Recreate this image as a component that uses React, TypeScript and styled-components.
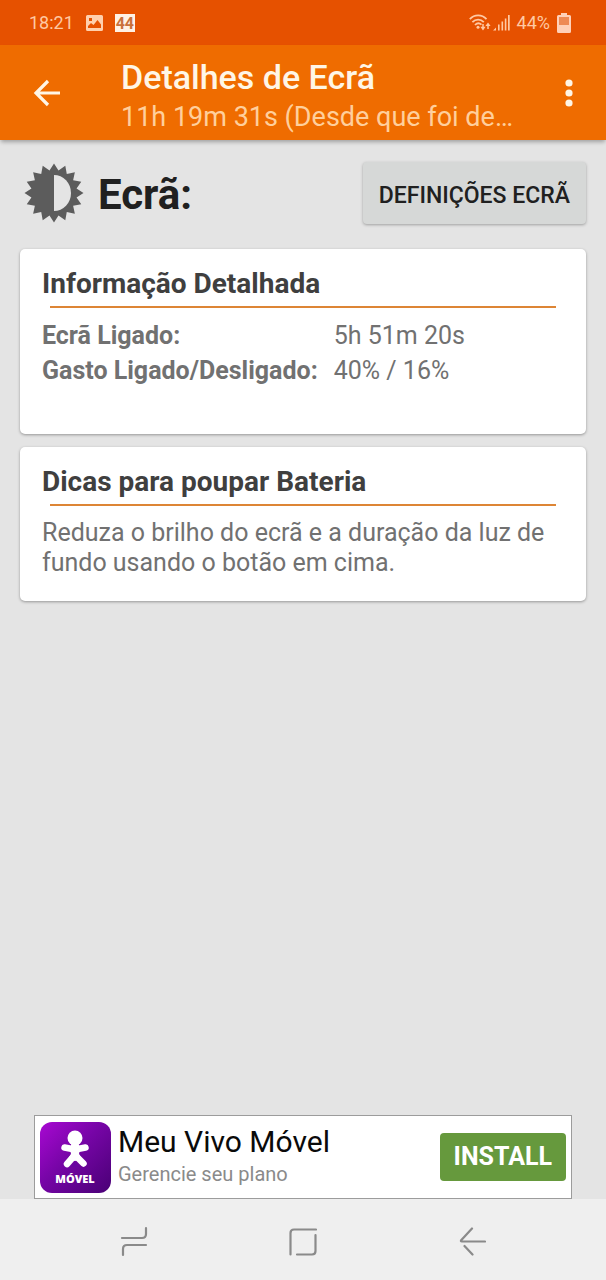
import React from "react";
import styled, { createGlobalStyle } from "styled-components";

const GlobalStyle = createGlobalStyle`
  *, *::before, *::after { box-sizing: border-box; }
  body {
    margin: 0;
    background: #e4e4e4;
    font-family: Roboto, "Liberation Sans", sans-serif;
  }
  button { font-family: inherit; border: 0; padding: 0; background: none; cursor: pointer; }
  h1, h2, p { margin: 0; }
  svg { display: block; }
`;

const Screen = styled.div`
  min-height: 100vh;
  display: flex;
  flex-direction: column;
  background: #e4e4e4;
`;

const StatusBar = styled.div`
  display: flex;
  justify-content: space-between;
  align-items: center;
  height: 45px;
  padding: 0 35px 0 29px;
  background: #e65100;
  color: #ffc9a3;
  font-size: 18px;
  line-height: 24px;
`;

const StatusGroup = styled.div<{ $gap: number }>`
  display: flex;
  align-items: center;
  gap: ${(p) => p.$gap}px;
`;

const CountBadge = styled.span`
  width: 20px;
  height: 18px;
  background: #fff1e4;
  color: #c9703a;
  font-size: 16px;
  font-weight: 700;
  line-height: 19px;
  text-align: center;
`;

const AppBar = styled.header`
  display: flex;
  align-items: center;
  gap: 24px;
  height: 95px;
  padding: 0 20px 0 23px;
  background: #ef6c00;
  color: #fff6e6;
  box-shadow: 0 3px 4px -1px rgba(0, 0, 0, 0.3);
`;

const BarButton = styled.button<{ $width: number }>`
  flex: none;
  display: flex;
  align-items: center;
  justify-content: center;
  width: ${(p) => p.$width}px;
  height: 48px;
  color: inherit;
`;

const Titles = styled.div`
  flex: 1;
  min-width: 0;
  padding: 9px 0 0 26px;
`;

const Title = styled.h1`
  font-size: 34px;
  font-weight: 500;
  line-height: 40px;
`;

const Subtitle = styled.p`
  color: #ffcf9c;
  font-size: 27px;
  line-height: 40px;
`;

const Content = styled.main`
  flex: 1;
  display: flex;
  flex-direction: column;
  gap: 13px;
  padding: 22px 20px 24px;
`;

const Summary = styled.div`
  display: flex;
  align-items: center;
  justify-content: space-between;
  height: 62px;
  margin-bottom: 12px;
`;

const SummaryName = styled.div`
  display: flex;
  align-items: center;
  gap: 14px;
  padding-left: 4px;
`;

const SummaryTitle = styled.h2`
  padding-top: 4px;
  color: #202020;
  font-size: 42px;
  font-weight: 700;
  line-height: 48px;
`;

const SettingsButton = styled.button`
  height: 62px;
  padding: 4px 16px 0;
  border-radius: 4px;
  background: #d6d8d7;
  color: #202020;
  font-size: 23px;
  font-weight: 500;
  box-shadow: 0 1px 3px rgba(0, 0, 0, 0.3);
`;

const Card = styled.section<{ $bottom: number }>`
  padding: 19px 22px ${(p) => p.$bottom}px;
  border-radius: 5px;
  background: #fff;
  color: #717171;
  font-size: 25px;
  box-shadow: 0 1px 3px rgba(0, 0, 0, 0.35);
`;

const CardTitle = styled.h2`
  color: #3f3f3f;
  font-size: 28px;
  font-weight: 700;
  line-height: 32px;
`;

const Divider = styled.hr`
  height: 2px;
  margin: 6px 8px 10px;
  border: 0;
  background: #dd8535;
`;

const Facts = styled.table`
  border-collapse: collapse;
  line-height: 35px;

  th { padding: 0 16px 0 0; font-weight: 700; text-align: left; }
  td { padding: 0; }
`;

const Tip = styled.p`
  padding-top: 2px;
  line-height: 30px;
`;

const Ad = styled.aside`
  display: flex;
  align-items: center;
  gap: 7px;
  height: 84px;
  margin: 0 34px;
  padding: 0 5px;
  border: 1px solid #9c9c9c;
  background: #fff;
`;

const AdText = styled.div`
  flex: 1;
  min-width: 0;
  padding-bottom: 2px;
  white-space: nowrap;
`;

const AdTitle = styled.p`
  color: #0a0a0a;
  font-size: 30px;
  line-height: 36px;
`;

const AdDetail = styled.p`
  color: #8a8a8a;
  font-size: 20px;
  line-height: 28px;
`;

const InstallButton = styled.button`
  height: 48px;
  padding: 0 14px 2px;
  border-radius: 4px;
  background: #66993d;
  color: #fff;
  font-size: 25px;
  font-weight: 700;
`;

const NavBar = styled.nav`
  display: flex;
  justify-content: center;
  gap: 121px;
  height: 81px;
  background: #efefef;
  color: #8a8a8a;
`;

const NavButton = styled.button`
  display: flex;
  align-items: center;
  justify-content: center;
  width: 48px;
  padding-top: 4px;
  color: inherit;
`;

const PictureIcon = () => (
  <svg width="17" height="16" viewBox="0 0 17 16" aria-hidden="true">
    <path
      fill="#ffd0ad"
      fillRule="evenodd"
      d="M1.5 0h14A1.5 1.5 0 0 1 17 1.500v13a1.500 1.500 0 0 1-1.500 1.500h-14A1.500 1.500 0 0 1 0 14.500v-13A1.500 1.500 0 0 1 1.500 0zM2 13h13V9.500L11.500 5 7.500 10 5 8 2 11zM3 3v3h3V3z"
    />
  </svg>
);

const WifiIcon = () => (
  <svg width="22" height="17" viewBox="0 0 22 17" fill="none" stroke="#ffc9a3" strokeWidth="1.800" aria-hidden="true">
    <path d="M0.800 5.200C5.500 0.200 12.800 0.200 17.500 5.200M3.400 8.200c3.200-3.400 8.200-3.400 11.400 0M6 11c1.900-2 4.600-2.100 6.500-.4" />
    <circle cx="9" cy="13.200" r="1.500" fill="#ffc9a3" stroke="none" />
    <path d="M14 10v4M19 15v-4" strokeWidth="1.500" />
    <path d="M11.400 12.800h5.200L14 16.400zM16.400 12h5.200L19 8.600z" fill="#ffc9a3" stroke="none" />
  </svg>
);

const SignalIcon = () => (
  <svg width="17" height="17" viewBox="0 0 17 17" aria-hidden="true">
    <path fill="#ffc9a3" d="M0 16.500L3 13.500v3zM5 10.500h1.600v6H5zM8.500 7.500h1.600v9H8.500zM11.800 4.500h1.600v12h-1.600zM15 1h1.700v15.500H15z" />
  </svg>
);

const BatteryIcon = () => (
  <svg width="14" height="20" viewBox="0 0 14 20" aria-hidden="true">
    <path fill="#ffd0b8" d="M4 0h6v2h2.500A1.500 1.500 0 0 1 14 3.500v15a1.500 1.500 0 0 1-1.500 1.500h-11A1.500 1.500 0 0 1 0 18.500v-15A1.500 1.500 0 0 1 1.500 2H4z" />
    <path fill="#ee8a55" d="M2 4h10v8H2z" />
  </svg>
);

const BackArrow = () => (
  <svg width="28" height="28" viewBox="0 0 28 28" fill="none" stroke="currentColor" strokeWidth="3.200" aria-hidden="true">
    <path d="M27 14H3M15 2L3 14l12 12" />
  </svg>
);

const MoreDots = () => (
  <svg width="8" height="28" viewBox="0 0 8 28" fill="currentColor" aria-hidden="true">
    <circle cx="4" cy="4" r="3.600" />
    <circle cx="4" cy="14" r="3.600" />
    <circle cx="4" cy="24" r="3.600" />
  </svg>
);

const sunPoints = Array.from({ length: 32 }, (_, i) => {
  const radius = i % 2 === 0 ? 29.5 : 23;
  const angle = (i * Math.PI) / 16;
  return `${(30 + radius * Math.sin(angle)).toFixed(2)},${(30 - radius * Math.cos(angle)).toFixed(2)}`;
}).join(" ");

const BrightnessIcon = () => (
  <svg width="60" height="60" viewBox="0 0 60 60" aria-hidden="true">
    <polygon points={sunPoints} fill="#5c5c5c" />
    <path d="M30 12a17 18 0 0 1 0 36z" fill="#e4e4e4" />
  </svg>
);

const VivoLogo = () => (
  <svg width="71" height="71" viewBox="0 0 71 71" role="img" aria-label="Vivo Móvel">
    <defs>
      <linearGradient id="vivo" x1="0" y1="0" x2="1" y2="1">
        <stop offset="0" stopColor="#a808d2" />
        <stop offset="0.45" stopColor="#7605a6" />
        <stop offset="1" stopColor="#490075" />
      </linearGradient>
    </defs>
    <rect width="71" height="71" rx="12" fill="url(#vivo)" />
    <circle cx="35" cy="16" r="7.500" fill="#fff" />
    <path
      d="M24.500 25.500L35 27.500l10.500-2M34 34l-7 8M36 34l7.500 7.500"
      fill="none"
      stroke="#fff"
      strokeWidth="6.500"
      strokeLinecap="round"
      strokeLinejoin="round"
    />
    <path d="M31.500 21h7l1.500 6-1 5 3 5-7 2-7-2 3-5-1-5z" fill="#fff" />
    <path d="M31 45l4-5.500 4.500 5.500z" fill="#6804a0" />
    <text x="35" y="61" fill="#fff" fontFamily="'Open Sans', Roboto, sans-serif" fontSize="11" fontWeight="800" textAnchor="middle">
      MÓVEL
    </text>
  </svg>
);

const navStroke = { fill: "none", stroke: "currentColor", strokeWidth: 2.2, strokeLinecap: "round" as const };

const RecentsIcon = () => (
  <svg width="28" height="30" viewBox="0 0 28 30" aria-hidden="true" {...navStroke}>
    <path d="M2 11h20q4 0 4-4V1.200M26 18H7q-4 0-4 4v6" />
  </svg>
);

const HomeIcon = () => (
  <svg width="28" height="28" viewBox="0 0 28 28" aria-hidden="true" {...navStroke}>
    <path d="M1.500 26.500V5q0-3.500 3.500-3.500h22M26.500 7v16q0 3.500-3.500 3.500H8" />
  </svg>
);

const NavBackIcon = () => (
  <svg width="28" height="30" viewBox="0 0 28 30" aria-hidden="true" {...navStroke}>
    <path d="M27 14.500H4q-1.800 0-.6-1.500L14 1.500M6.500 19l8 8.500" />
  </svg>
);

const facts = [
  { label: "Ecrã Ligado:", value: "5h 51m 20s" },
  { label: "Gasto Ligado/Desligado:", value: "40% / 16%" },
];

export default function App() {
  return (
    <Screen>
      <GlobalStyle />
      <StatusBar>
        <StatusGroup $gap={12}>
          <span>18:21</span>
          <PictureIcon />
          <CountBadge>44</CountBadge>
        </StatusGroup>
        <StatusGroup $gap={7}>
          <StatusGroup $gap={2}>
            <WifiIcon />
            <SignalIcon />
          </StatusGroup>
          <span>44%</span>
          <BatteryIcon />
        </StatusGroup>
      </StatusBar>
      <AppBar>
        <BarButton $width={48} aria-label="Voltar">
          <BackArrow />
        </BarButton>
        <Titles>
          <Title>Detalhes de Ecrã</Title>
          <Subtitle>11h 19m 31s (Desde que foi de…</Subtitle>
        </Titles>
        <BarButton $width={34} aria-label="Mais opções">
          <MoreDots />
        </BarButton>
      </AppBar>
      <Content>
        <Summary>
          <SummaryName>
            <BrightnessIcon />
            <SummaryTitle>Ecrã:</SummaryTitle>
          </SummaryName>
          <SettingsButton>DEFINIÇÕES ECRÃ</SettingsButton>
        </Summary>
        <Card $bottom={46}>
          <CardTitle>Informação Detalhada</CardTitle>
          <Divider />
          <Facts>
            <tbody>
              {facts.map((fact) => (
                <tr key={fact.label}>
                  <th scope="row">{fact.label}</th>
                  <td>{fact.value}</td>
                </tr>
              ))}
            </tbody>
          </Facts>
        </Card>
        <Card $bottom={23}>
          <CardTitle>Dicas para poupar Bateria</CardTitle>
          <Divider />
          <Tip>Reduza o brilho do ecrã e a duração da luz de fundo usando o botão em cima.</Tip>
        </Card>
      </Content>
      <Ad>
        <VivoLogo />
        <AdText>
          <AdTitle>Meu Vivo Móvel</AdTitle>
          <AdDetail>Gerencie seu plano</AdDetail>
        </AdText>
        <InstallButton>INSTALL</InstallButton>
      </Ad>
      <NavBar aria-label="Sistema">
        <NavButton aria-label="Recentes">
          <RecentsIcon />
        </NavButton>
        <NavButton aria-label="Início">
          <HomeIcon />
        </NavButton>
        <NavButton aria-label="Voltar">
          <NavBackIcon />
        </NavButton>
      </NavBar>
    </Screen>
  );
}
